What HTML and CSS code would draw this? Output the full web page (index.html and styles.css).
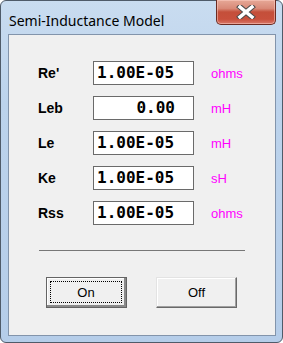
FILE: index.html
```html
<!DOCTYPE html>
<html lang="en">
<head>
    <meta charset="UTF-8">
    <title>Semi-Inductance Model</title>
    <link rel="stylesheet" href="styles.css">
</head>
<body>
    <div class="window">
        <div class="titlebar">
            <span class="title">Semi-Inductance Model</span>
            <div class="close">
                <svg width="20" height="14" viewBox="0 0 20 14">
                    <path d="M4 2 L16 12 M16 2 L4 12" stroke="#4a4a4a" stroke-width="5.5" stroke-linecap="square"/>
                    <path d="M4 2 L16 12 M16 2 L4 12" stroke="#ffffff" stroke-width="3.5" stroke-linecap="square"/>
                </svg>
            </div>
        </div>
        <div class="client">
            <div class="fields">
                <div class="row">
                    <span class="label">Re'</span>
                    <div class="box">1.00E-05</div>
                    <span class="unit">ohms</span>
                </div>
                <div class="row">
                    <span class="label">Leb</span>
                    <div class="box right">0.00</div>
                    <span class="unit">mH</span>
                </div>
                <div class="row">
                    <span class="label">Le</span>
                    <div class="box">1.00E-05</div>
                    <span class="unit">mH</span>
                </div>
                <div class="row">
                    <span class="label">Ke</span>
                    <div class="box">1.00E-05</div>
                    <span class="unit">sH</span>
                </div>
                <div class="row">
                    <span class="label">Rss</span>
                    <div class="box">1.00E-05</div>
                    <span class="unit">ohms</span>
                </div>
            </div>
            <div class="sep"></div>
            <div class="buttons">
                <button class="btn default"><span class="focus">On</span></button>
                <button class="btn">Off</button>
            </div>
        </div>
    </div>
</body>
</html>
```

FILE: styles.css
```css
* {
    margin: 0;
    padding: 0;
    box-sizing: border-box;
}
body {
    background: #ffffff;
    width: 283px;
    height: 343px;
    overflow: hidden;
}

.window {
    width: 283px;
    height: 343px;
    border: 1px solid #4f5b69;
    border-radius: 6px;
    background: linear-gradient(180deg, #c9dcf0 0%, #bcd3ec 30%, #b5cde9 100%);
    padding: 0 6px 6px 7px;
    display: flex;
    flex-direction: column;
}

.titlebar {
    height: 33px;
    display: flex;
    justify-content: space-between;
    align-items: flex-start;
}
.title {
    padding-left: 1px;
    margin-top: 10px;
    font-family: "Noto Sans", sans-serif;
    font-size: 14px;
    color: #000;
}
.close {
    width: 60px;
    height: 25px;
    margin-top: -1px;
    border: 1px solid #6b2b22;
    border-top: none;
    border-radius: 0 0 5px 5px;
    background: linear-gradient(180deg, #e6a897 0%, #d98a78 35%, #c44f3a 50%, #c8503c 80%, #d8786a 100%);
    box-shadow: inset 0 0 0 1px rgba(255, 210, 200, 0.5);
    display: flex;
    align-items: center;
    justify-content: center;
}

.client {
    flex: 1;
    border: 1px solid #8294ab;
    background: #f0f0f0;
    padding: 26px 0 0 29px;
}

.fields {
    display: flex;
    flex-direction: column;
    gap: 11px;
}
.row {
    display: flex;
    align-items: center;
    height: 24px;
}
.label {
    width: 55px;
    font-family: "Liberation Sans", Arial, sans-serif;
    font-weight: bold;
    font-size: 14px;
    color: #000;
}
.box {
    width: 101px;
    height: 24px;
    border: 1px solid #6a6a6a;
    background: #fff;
    padding: 0 0 0 3px;
    font-family: "DejaVu Sans Mono", monospace;
    font-weight: bold;
    font-size: 16px;
    line-height: 21px;
    color: #000;
}
.box.right {
    text-align: right;
    padding-right: 18px;
}
.unit {
    margin-left: 17px;
    font-family: "Liberation Sans", Arial, sans-serif;
    font-size: 13px;
    color: #ff00ff;
}

.sep {
    margin-top: 25px;
    margin-left: 1px;
    width: 206px;
    height: 1px;
    background: #777;
}

.buttons {
    display: flex;
    gap: 29px;
    margin-top: 26px;
    margin-left: 8px;
}
.btn {
    width: 81px;
    height: 31px;
    background: #f0f0f0;
    border: 1px solid;
    border-color: #e3e3e3 #696969 #696969 #e3e3e3;
    box-shadow: inset -1px -1px 0 #a0a0a0, inset 1px 1px 0 #fff;
    font-family: "Liberation Sans", Arial, sans-serif;
    font-size: 13px;
    color: #000;
    display: flex;
    align-items: center;
    justify-content: center;
}
.btn.default {
    border: 1px solid #646464;
    box-shadow: inset -2px -2px 0 #8a8a8a, inset 1px 1px 0 #fff;
    padding: 3px 4px 4px 3px;
}
.focus {
    width: 100%;
    height: 100%;
    border: 1px dotted #000;
    display: flex;
    align-items: center;
    justify-content: center;
}
```
